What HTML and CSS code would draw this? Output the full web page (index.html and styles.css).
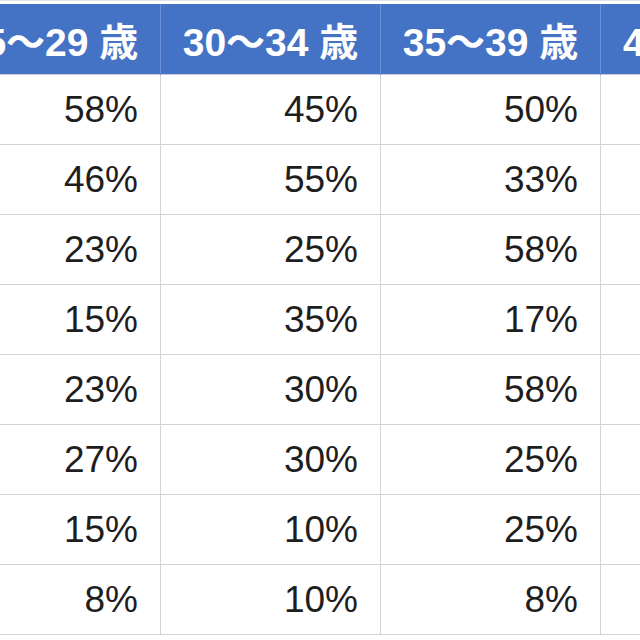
FILE: index.html
```html
<!DOCTYPE html>
<html lang="ja">
<head>
<meta charset="utf-8">
<link rel="stylesheet" href="styles.css">
</head>
<body>
<div class="viewport">
<table class="stats">
  <colgroup><col class="c"><col class="c"><col class="c"><col class="c"></colgroup>
  <thead>
    <tr><th>25～29 歳</th><th>30～34 歳</th><th>35～39 歳</th><th>40～44 歳</th></tr>
  </thead>
  <tbody>
    <tr><td>58%</td><td>45%</td><td>50%</td><td></td></tr>
    <tr><td>46%</td><td>55%</td><td>33%</td><td></td></tr>
    <tr><td>23%</td><td>25%</td><td>58%</td><td></td></tr>
    <tr><td>15%</td><td>35%</td><td>17%</td><td></td></tr>
    <tr><td>23%</td><td>30%</td><td>58%</td><td></td></tr>
    <tr><td>27%</td><td>30%</td><td>25%</td><td></td></tr>
    <tr><td>15%</td><td>10%</td><td>25%</td><td></td></tr>
    <tr><td>8%</td><td>10%</td><td>8%</td><td></td></tr>
  </tbody>
</table>
</div>
</body>
</html>
```

FILE: styles.css
```css
html, body {
  margin: 0;
  padding: 0;
  background: #ffffff;
}
.viewport {
  width: 640px;
  height: 640px;
  overflow: hidden;
  padding-top: 3px;
  box-sizing: border-box;
  border-top: 1px solid #e2e4ea;
}
.stats {
  margin-left: -60px;
  width: 880px;
  table-layout: fixed;
  border-collapse: collapse;
  font-family: "Liberation Sans", "Noto Sans CJK JP", sans-serif;
}
.stats .c {
  width: 220px;
}
.stats th {
  height: 70px;
  padding: 0;
  background: #4472c4;
  color: #ffffff;
  font-size: 39px;
  font-weight: bold;
  text-align: center;
  border-left: 1px solid #6a8fd6;
  white-space: nowrap;
}
.stats td {
  height: 69px;
  padding: 0 22px 0 0;
  font-size: 37px;
  color: #1e1e1e;
  text-align: right;
  border-left: 1px solid #d3d3d3;
  border-bottom: 1px solid #d3d3d3;
}
.stats tbody tr:first-child td {
  border-top: 1px solid #c9ccd6;
}
```
